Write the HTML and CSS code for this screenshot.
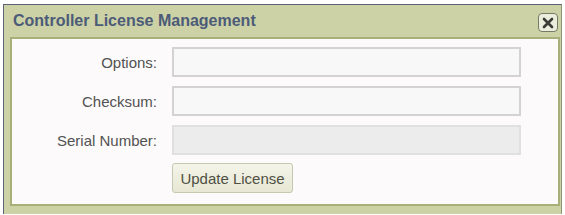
FILE: index.html
```html
<!DOCTYPE html>
<html>
<head>
  <title>Controller License Management</title>
  <link rel="stylesheet" href="styles.css">
</head>
<body>
  <div class="dialog">
    <div class="titlebar">
      <span class="title">Controller License Management</span>
      <button class="close-btn" title="Close">
        <svg width="12" height="12" viewBox="0 0 12 12">
          <path d="M2 2 L10 10 M10 2 L2 10" stroke="#3b3b38" stroke-width="2.6" stroke-linecap="round" />
        </svg>
      </button>
    </div>
    <div class="panel">
      <form class="license-form">
        <label for="options">Options:</label>
        <input type="text" id="options" />
        <label for="checksum">Checksum:</label>
        <input type="text" id="checksum" />
        <label for="serial">Serial Number:</label>
        <input type="text" id="serial" disabled />
        <span></span>
        <div class="actions">
          <button type="button" class="btn">Update License</button>
        </div>
      </form>
    </div>
  </div>
</body>
</html>
```

FILE: styles.css
```css
body {
  margin: 0;
  background-color: #ffffff;
  font-family: "Liberation Sans", Arial, sans-serif;
}

.dialog {
  margin: 4px 0 0 3px;
  width: 557px;
  height: 209px;
  background-color: #cdd2a6;
  border-top: 1px solid #5d6376;
  border-left: 1px solid #5d6376;
  border-right: 1px solid #8e9372;
  display: flex;
  flex-direction: column;
}

.titlebar {
  height: 32px;
  display: flex;
  align-items: center;
  justify-content: space-between;
  padding: 0 3px 0 9px;
}

.title {
  font-size: 16px;
  font-weight: bold;
  color: #4c5b78;
  margin-top: -1px;
}

.close-btn {
  align-self: flex-start;
  width: 20px;
  height: 19px;
  margin-top: 8px;
  padding: 0;
  border: 1px solid #777a66;
  border-radius: 4px;
  background-color: #eceedd;
  display: flex;
  align-items: center;
  justify-content: center;
}

.panel {
  margin: 0 1px 0 6px;
  height: 169px;
  background-color: #fcfafa;
  border: 2px solid #a8af79;
  box-sizing: border-box;
}

.license-form {
  display: grid;
  grid-template-columns: 145px 349px;
  column-gap: 15px;
  row-gap: 9px;
  padding-top: 8px;
  align-items: center;
}

.license-form label {
  text-align: right;
  font-size: 15px;
  color: #525252;
}

.license-form input {
  height: 30px;
  box-sizing: border-box;
  border: 2px solid #d3d3d3;
  background-color: #f9f8f8;
  font-size: 14px;
}

.license-form input:disabled {
  background-color: #ececec;
  border-color: #e0e0e0;
}

.actions {
  margin-top: -1px;
}

.btn {
  width: 121px;
  height: 30px;
  font-family: "Liberation Sans", Arial, sans-serif;
  font-size: 15px;
  color: #4e5044;
  border: 1px solid #c6c8b2;
  border-radius: 3px;
  background: linear-gradient(#f4f4e9, #e7e7d4);
  padding: 0;
}
```
